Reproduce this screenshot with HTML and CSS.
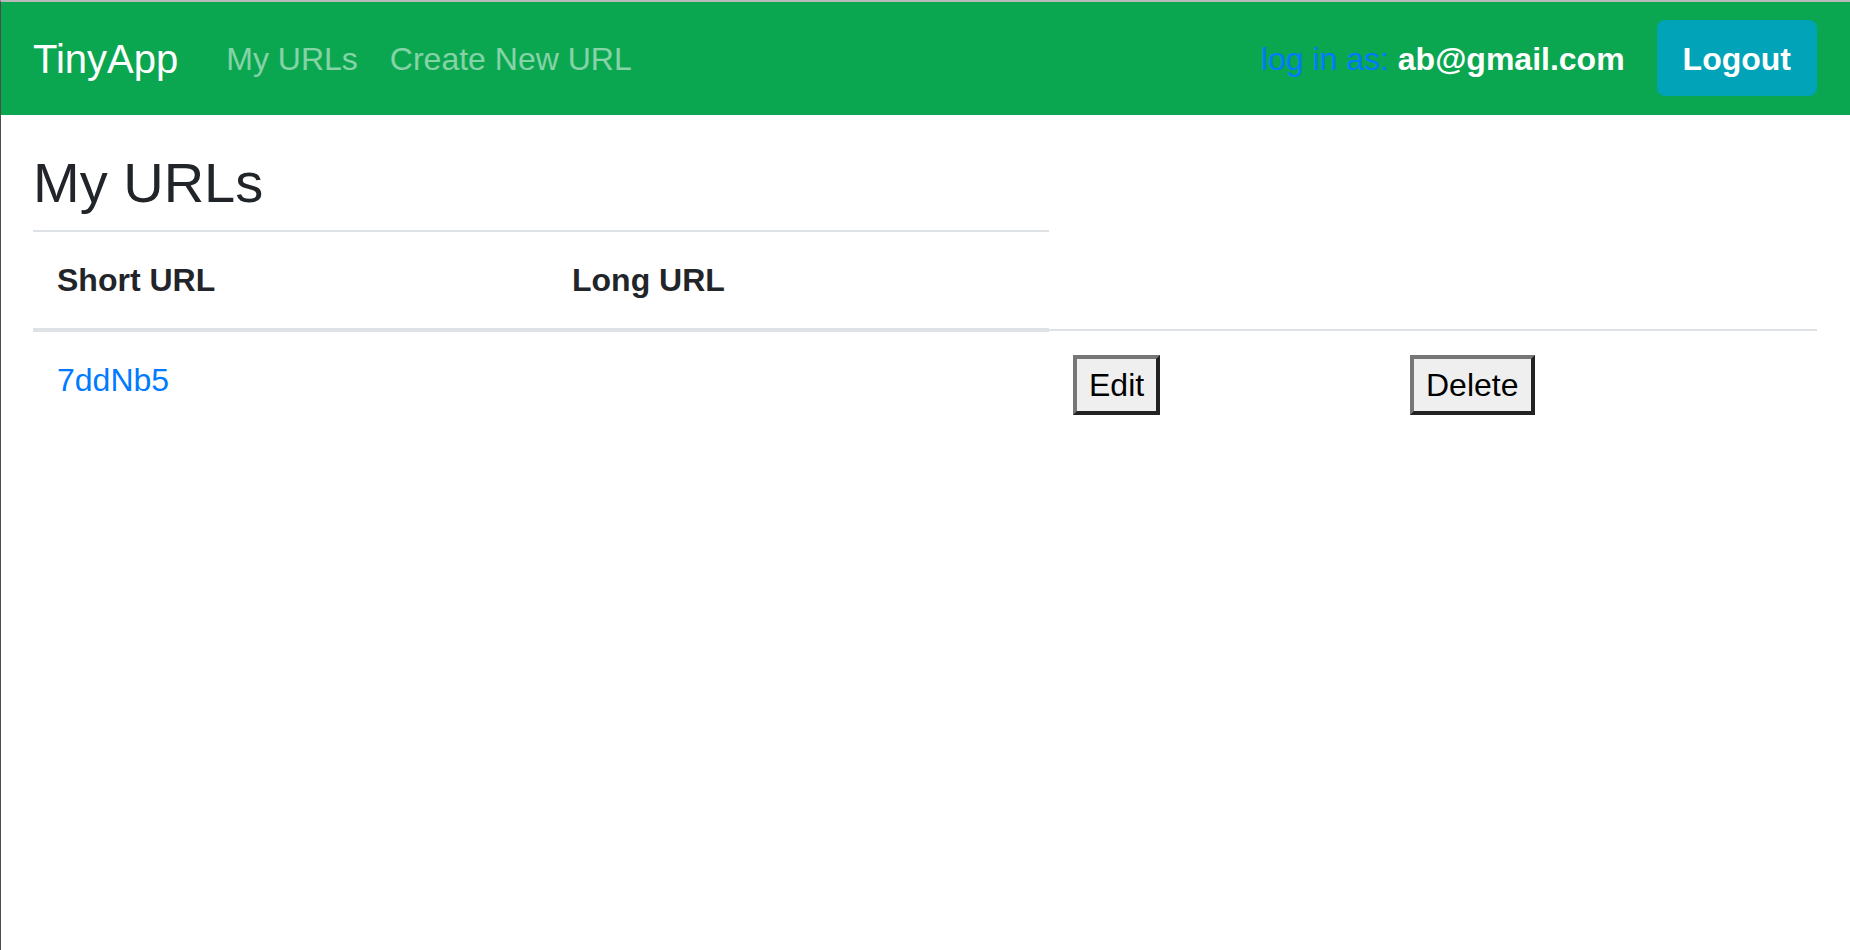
FILE: index.html
```html
<!DOCTYPE html>
<html lang="en">
<head>
<meta charset="utf-8">
<title>TinyApp</title>
<link rel="stylesheet" href="styles.css">
</head>
<body class="page">
  <nav class="navbar">
    <a class="brand" href="#">TinyApp</a>
    <div class="nav-links">
      <a class="nav-link" href="#">My URLs</a>
      <a class="nav-link" href="#">Create New URL</a>
    </div>
    <div class="nav-right">
      <span class="login"><span class="login-label">log in as:</span> <b class="login-email">ab@gmail.com</b></span>
      <button class="logout" type="button">Logout</button>
    </div>
  </nav>
  <main class="main">
    <h1 class="title">My URLs</h1>
    <table class="urls">
      <colgroup>
        <col class="col-short">
        <col class="col-long">
        <col class="col-edit">
        <col class="col-delete">
      </colgroup>
      <thead>
        <tr>
          <th>Short URL</th>
          <th>Long URL</th>
        </tr>
      </thead>
      <tbody>
        <tr>
          <td><a class="short-link" href="#">7ddNb5</a></td>
          <td></td>
          <td><button class="plain-btn" type="button">Edit</button></td>
          <td><button class="plain-btn" type="button">Delete</button></td>
        </tr>
      </tbody>
    </table>
  </main>
</body>
</html>
```

FILE: styles.css
```css
* { box-sizing: border-box; }

html, body { margin: 0; padding: 0; }

.page {
  min-height: 100vh;
  background: #ffffff;
  border-top: 2px solid #b9b9b9;
  border-left: 1px solid #4d4d4d;
  font-family: "Liberation Sans", Arial, sans-serif;
  color: #212529;
}

.navbar {
  display: flex;
  align-items: center;
  height: 113px;
  padding: 18px 33px 19px 32px;
  background: #0ba750;
}

.brand {
  font-size: 40px;
  line-height: 60px;
  padding-top: 1px;
  color: #ffffff;
  text-decoration: none;
  margin-right: 32px;
}

.nav-links {
  display: flex;
  align-items: center;
}

.nav-link {
  font-size: 32px;
  line-height: 48px;
  padding: 2px 16px 0 16px;
  color: rgba(255, 255, 255, 0.5);
  text-decoration: none;
}

.nav-right {
  margin-left: auto;
  display: flex;
  align-items: center;
  gap: 32px;
}

.login {
  font-size: 32px;
  line-height: 48px;
  padding-top: 2px;
}

.login-label { color: #007bff; }

.login-email {
  color: #ffffff;
  font-weight: bold;
}

.logout {
  font-family: "Liberation Sans", Arial, sans-serif;
  font-size: 32px;
  font-weight: bold;
  line-height: 48px;
  height: 76px;
  padding: 13px 24px 11px 24px;
  color: #ffffff;
  background: #00a3b7;
  border: 2px solid #00a3b7;
  border-radius: 8px;
  cursor: pointer;
}

.main {
  padding: 34px 33px 0 32px;
}

.title {
  margin: 0 0 14px 0;
  font-size: 56px;
  font-weight: 500;
  line-height: 67px;
  color: #212529;
}

.urls {
  width: 100%;
  table-layout: fixed;
  border-collapse: collapse;
  font-size: 32px;
  line-height: 48px;
  color: #212529;
}

.col-short { width: 515px; }
.col-long { width: 501px; }
.col-edit { width: 337px; }
.col-delete { width: 431px; }

.urls th {
  padding: 24px;
  text-align: left;
  font-weight: bold;
  vertical-align: bottom;
  border-top: 2px solid #dee2e6;
  border-bottom: 4px solid #dee2e6;
}

.urls td {
  padding: 24px;
  vertical-align: top;
  border-top: 2px solid #dee2e6;
}

.short-link {
  color: #007bff;
  text-decoration: none;
}

.plain-btn {
  font-family: "Liberation Sans", Arial, sans-serif;
  font-size: 32px;
  line-height: 48px;
  padding: 2px 12px;
  color: #000000;
  background: #efefef;
  border-style: solid;
  border-width: 4px;
  border-color: #767676 #222222 #222222 #767676;
  border-radius: 0;
}
```
